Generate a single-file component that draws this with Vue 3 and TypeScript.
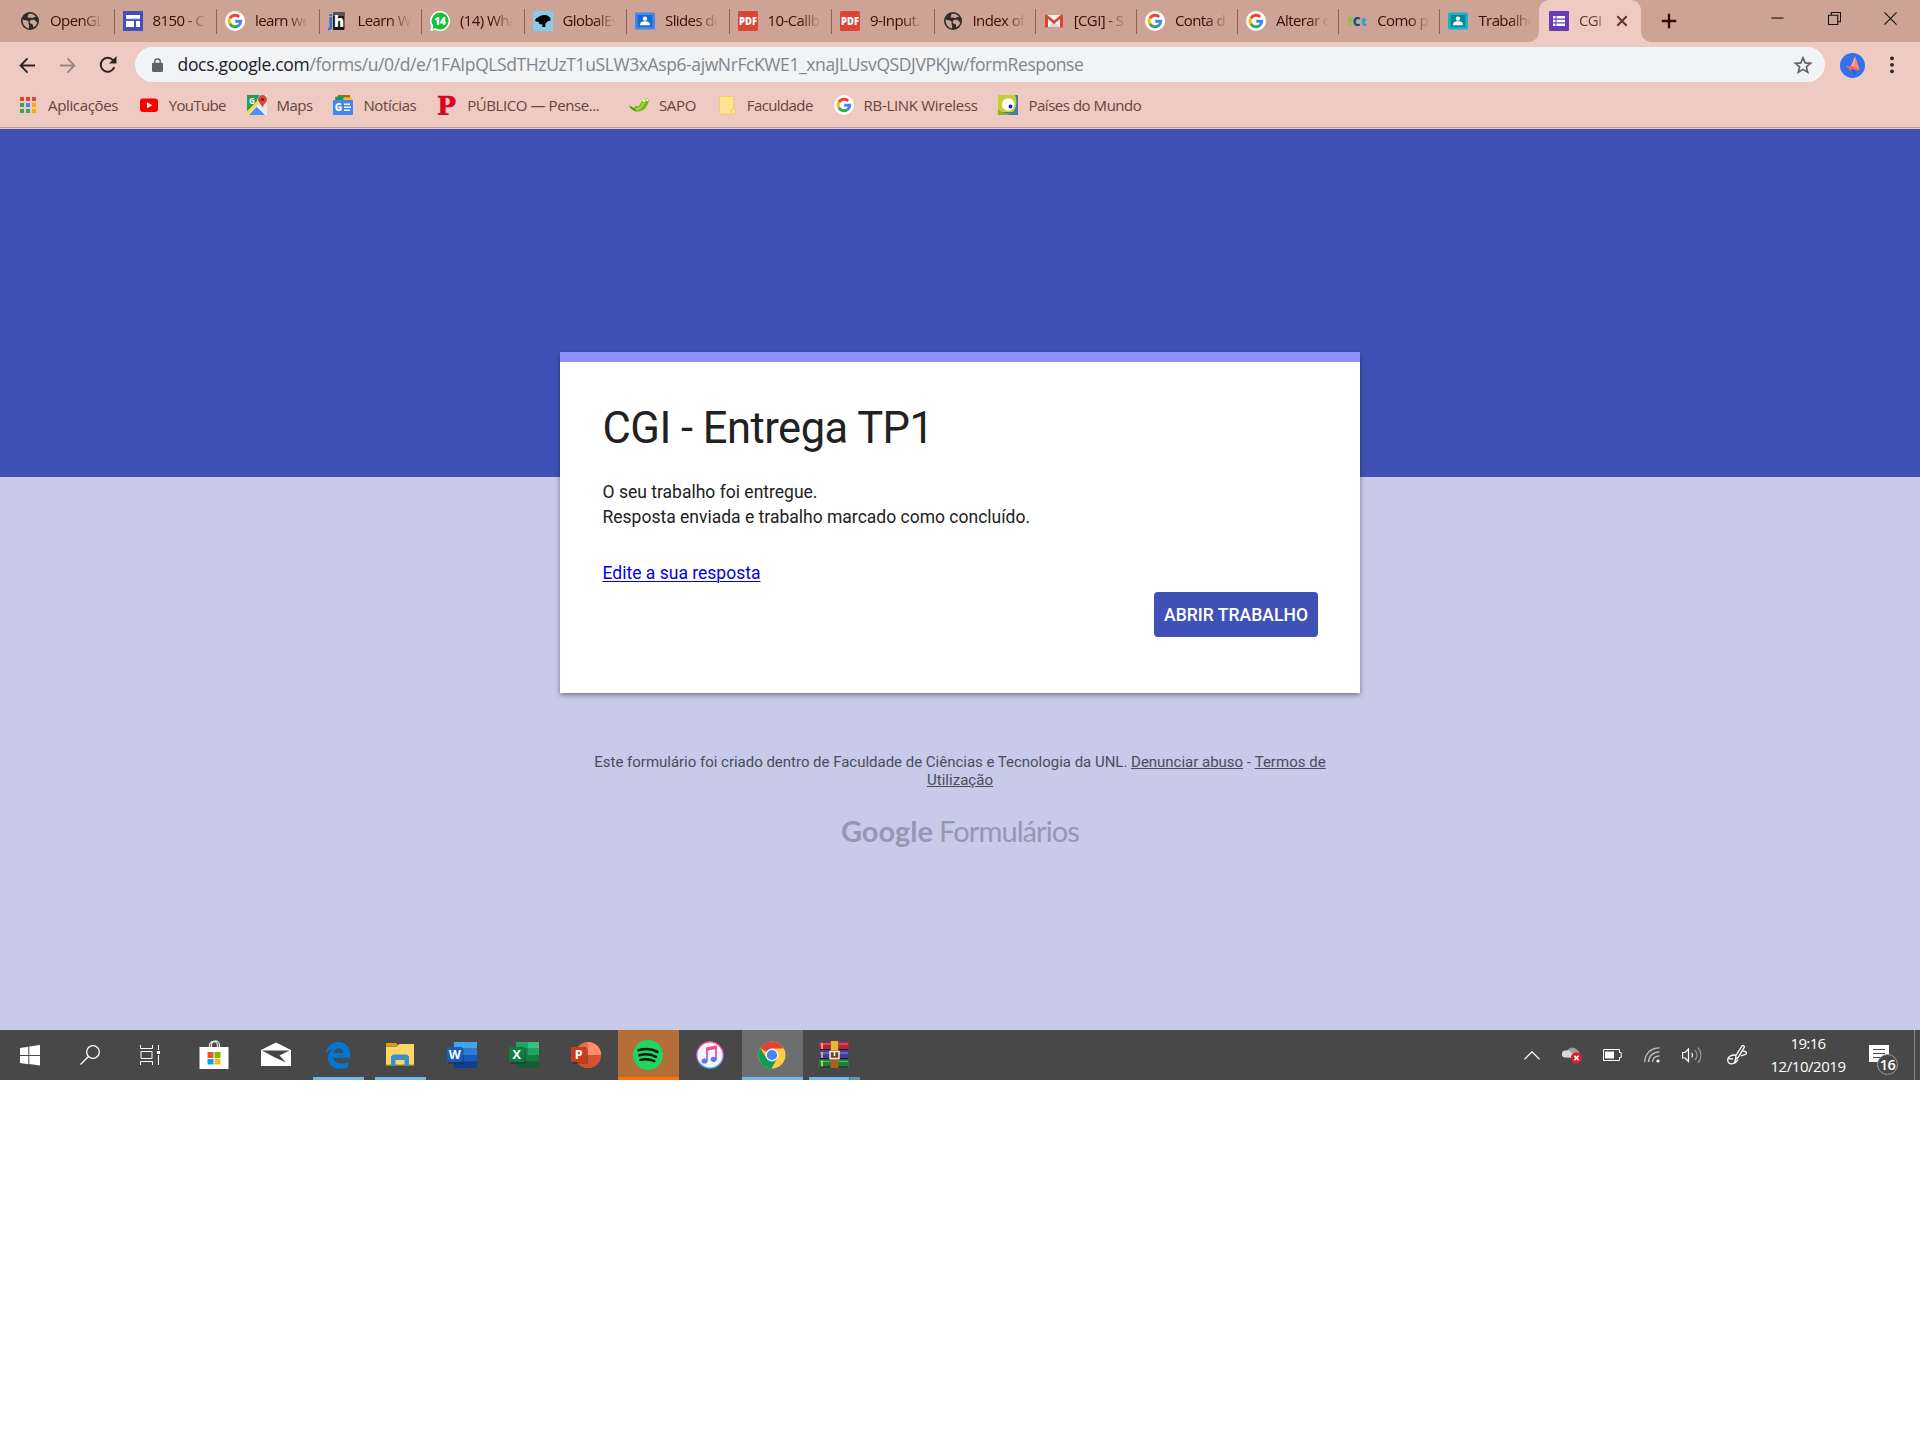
<script setup lang="ts">
interface Tab { icon: string; label: string }
interface Bookmark { icon: string; label: string; width: number }
interface TaskApp { icon: string; name: string; state?: string }

// Spreads a label over a given width by adjusting its tracking
const vFit = {
  mounted(el: HTMLElement, binding: { value: number }) {
    const count = (el.textContent ?? '').trim().length
    const natural = el.getBoundingClientRect().width
    if (count > 1) el.style.letterSpacing = `${(binding.value - natural) / count}px`
  },
}

const googleG =
  '<circle cx="10" cy="10" r="10" fill="#fff"/>' +
  '<g fill="none" stroke-width="2.9"><path d="M14.2 6A5.8 5.8 0 0 0 4.9 7.3" stroke="#ea4335"/>' +
  '<path d="M4.9 7.2a5.8 5.8 0 0 0 0 5.6" stroke="#fbbc05"/>' +
  '<path d="M4.9 12.7a5.8 5.8 0 0 0 8.9 1.7" stroke="#34a853"/>' +
  '<path d="M13.7 14.5A5.8 5.8 0 0 0 15.8 10.2H10.2" stroke="#4285f4"/></g>'

const globe =
  '<circle cx="10" cy="10" r="9" fill="#2d2b2a"/>' +
  '<path d="M2.6 8.6C4.400 9.600 7 8.800 8.400 10.400c1 1.300-.6 1.800.4 3 .8 1 .3 2.600-.1 4C5.200 16.900 2.400 13.500 2.600 8.600z" fill="#cda396"/>' +
  '<path d="M8.300 3.200c3-1 6 .3 7.600 2.600-1 .5-1.600 0-2.500.6-.8.700-1.700.8-2.400.4-.8-.5-2.600.3-3.400-.6-.6-.8.900-1.600.7-3z" fill="#cda396"/>' +
  '<path d="M10.800 9.300c1.500-.9 4-.5 5 .9.600 1 1.300.6 1.500 1.100-.4 2.200-1.900 4.200-4 5-.7-1 .2-2-.6-2.900-.8-.7-2.700-.6-2.900-2-.1-.9.200-1.700 1-2.100z" fill="#cda396"/>'

const pdf =
  '<rect width="20" height="20" rx="1.500" fill="#db4437"/><text x="10" y="14" text-anchor="middle" font-family="Open Sans, sans-serif" font-weight="800" font-size="10.500" textLength="18" lengthAdjust="spacingAndGlyphs" fill="#fff">PDF</text>'

const person = (frame: string, body: string) =>
  `<rect y="1.500" width="20" height="17" rx="1.500" fill="${frame}"/><rect x="2.700" y="4" width="14.600" height="12" fill="${body}"/>` +
  '<circle cx="10" cy="7.600" r="2.200" fill="#fff"/><path d="M5 14.300c0-3.200 2.200-4 5-4s5 .8 5 4z" fill="#fff"/>'

const art: Record<string, string> = {
  globe,
  google: googleG,
  pdf,
  sites: '<rect width="20" height="20" fill="#3f51b5"/><path d="M3 4h14v4H3zM3 10h8v6H3zM13 10h4v6h-4z" fill="#fff"/><path d="M3 8.200h14" stroke="#6c7bd0"/>',
  jh: '<rect x="5" y="1" width="11.500" height="18" rx="1" fill="#1b1b1b"/><rect x="5" y="1" width="11.500" height="4" fill="#555"/><text x="0" y="15" font-family="Open Sans, sans-serif" font-weight="700" font-size="16" fill="#2d6fc0">j</text><text x="6" y="15.500" font-family="Open Sans, sans-serif" font-weight="800" font-size="15" fill="#fff">h</text>',
  whats: '<path d="M10 0a10 10 0 1 1-4.800 18.800L.3 20l1.200-4.800A10 10 0 0 1 10 0z" fill="#fff"/><path d="M10 1.500a8.500 8.500 0 1 1-4.500 15.700L2.500 18l.8-3A8.500 8.500 0 0 1 10 1.500z" fill="#12c13c"/><text x="10" y="13.600" text-anchor="middle" font-family="Open Sans, sans-serif" font-weight="800" font-size="10" fill="#fff">14</text>',
  events: '<rect width="20" height="20" fill="#86cbea"/><path d="M2.300 8.500C3.500 6.500 6 6.300 8 4.500c3-1 6-.5 7.500.8 1.500.7 2.200 2 2 4.200l-3 1-2 2-.3 3.500h-3l.2-2.500-3-.5-.8-2-3.300-.7z" fill="#000"/>',
  slides: person('#4285f4', '#1967d2'),
  classroom: person('#12b5cb', '#0b8793'),
  gmail: '<path d="M2 4h16v12H2z" fill="#f4f4f4"/><path d="M4.500 16 10 10.500 15.500 16z" fill="#d7d7d7"/><path d="M1 16.500V3.800h2l7 5.700 7-5.700h2v12.700h-3V8l-6 5-6-5v8.500z" fill="#db4437"/>',
  fct: '<g font-family="Open Sans, sans-serif" font-weight="800" font-size="12.500"><text x="0" y="14.500" fill="#8bc53f">f</text><text x="5.700" y="14.500" font-size="12" fill="#164b7c">C</text><text x="13.800" y="14.500" fill="#1ba9d9">t</text></g>',
  forms: '<rect width="20" height="20" rx="1" fill="#673ab7"/><path d="M4 5h2.500v2.500H4zM7.500 5H16v2.500H7.500zM4 8.800h2.500v2.500H4zM7.500 8.800H16v2.500H7.500zM4 12.600h2.500v2.500H4zM7.500 12.600H16v2.500H7.500z" fill="#fff"/>',
  apps: '<path d="M2 2h4v4H2zM8 2h4v4H8zM14 2h4v4h-4z" fill="#ea4335"/><path d="M2 8h4v4H2zM2 14h4v4H2z" fill="#34a853"/><path d="M8 8h4v4H8z" fill="#4285f4"/><path d="M14 8h4v4h-4zM14 14h4v4h-4z" fill="#fbab00"/><path d="M8 14h4v4H8z" fill="#34a853"/>',
  youtube: '<rect x="1" y="3.500" width="18" height="13.500" rx="3" fill="#f00"/><path d="M8 7.300v6l5.300-3z" fill="#fff"/>',
  maps: '<path d="M0 0h20v20H0z" fill="#e8e8e8"/><path d="M0 0h13L0 17z" fill="#1fa463"/><path d="M0 0h11.500L9 9.500l-9 9z" fill="#249c5c"/><path d="m2 20 8-8.500 8.500 8.500z" fill="#4d8df5"/><path d="m-.5 19 11-11.500" stroke="#ffd44a" stroke-width="3"/><path d="m10 11 9 9" stroke="#fff" stroke-width="1.200"/><text x="2" y="8.500" font-family="Open Sans, sans-serif" font-size="8" font-weight="700" fill="#fff">G</text><path d="M15.500 0a4.600 4.600 0 0 1 4.500 4.600c0 3.400-3.800 4.500-4.500 8.400-.7-3.900-4.500-5-4.500-8.400A4.600 4.600 0 0 1 15.500 0z" fill="#db4437"/><circle cx="15.500" cy="4.600" r="1.700" fill="#73261e"/>',
  news: '<path d="M5 0h12v8H5z" fill="#ea4335"/><path d="m2 2 11-2 2 8H3z" fill="#0f9d58"/><path d="m11 2 8 1-1 5H9z" fill="#fbbc04"/><rect y="5" width="20" height="15" rx="1" fill="#4285f4"/><text x="1.700" y="16" font-family="Open Sans, sans-serif" font-size="10" font-weight="800" fill="#fff">G</text><path d="M11 9.300h6M11 12.300h7M11 15.300h6" stroke="#fff" stroke-width="1.600"/>',
  publico: '<text x="0" y="19.500" font-family="DejaVu Serif, serif" font-size="26" font-weight="700" textLength="19" lengthAdjust="spacingAndGlyphs" fill="#d7061d" stroke="#d7061d" stroke-width=".6">P</text>',
  sapo: '<path d="M0 10.500c2.500-.5 3 2.500 5 2.500 1-2 2.500-2.500 4.500-1.500 2-2 3-5.500 5-7.500l2 .5L18 3l2 2c-1 6-5 11.500-11 11.500-4 0-8-2-9-6z" fill="#72b51e"/><path d="M6 14.500c4 0 7-3 9-7" stroke="#a7dc3a" stroke-width="1.800" fill="none"/><circle cx="15" cy="5.500" r="1.500" fill="#e9f7c8"/><circle cx="18.300" cy="5" r="1.200" fill="#e9f7c8"/><path d="m2 12 5 3.800" stroke="#37771a"/>',
  folder: '<path d="M2.500 1.500h14v12l1.500.5v4l-2 1H2.500z" fill="#ffe491" stroke="#f1cb59" stroke-width=".8"/><path d="M14 18.500v-4l2.500-1" fill="none" stroke="#f1cb59"/>',
  world: '<path d="M0 0h20v20H0z" fill="#477aa5"/><path d="M0 0h17c2 5 2 12-2 17H0z" fill="#c7cf2f"/><circle cx="10.200" cy="9.500" r="6.200" fill="#fff"/><circle cx="12.500" cy="11.500" r="1.900" fill="#1810e0"/><path d="M0 14c2 3 7 5 13 4l-4 2H0z" fill="#99ad22"/>',
}

const tabs: Tab[] = [
  { icon: 'globe', label: 'OpenGL' }, { icon: 'sites', label: '8150 - C' },
  { icon: 'google', label: 'learn we' }, { icon: 'jh', label: 'Learn W' },
  { icon: 'whats', label: '(14) Wha' }, { icon: 'events', label: 'GlobalEv' },
  { icon: 'slides', label: 'Slides de' }, { icon: 'pdf', label: '10-Callb' },
  { icon: 'pdf', label: '9-Input.' }, { icon: 'globe', label: 'Index of' },
  { icon: 'gmail', label: '[CGI] - S' }, { icon: 'google', label: 'Conta d' },
  { icon: 'google', label: 'Alterar c' }, { icon: 'fct', label: 'Como p' },
  { icon: 'classroom', label: 'Trabalho' },
]

const bookmarks: Bookmark[] = [
  { icon: 'apps', label: 'Aplicações', width: 70 }, { icon: 'youtube', label: 'YouTube', width: 57 },
  { icon: 'maps', label: 'Maps', width: 36 }, { icon: 'news', label: 'Notícias', width: 53 },
  { icon: 'publico', label: 'PÚBLICO — Pense...', width: 132 }, { icon: 'sapo', label: 'SAPO', width: 37 },
  { icon: 'folder', label: 'Faculdade', width: 66 }, { icon: 'google', label: 'RB-LINK Wireless', width: 114 },
  { icon: 'world', label: 'Países do Mundo', width: 113 },
]

const office = (letter: string, back: string, tag: string) =>
  back + `<rect x="1.500" y="8.500" width="15.500" height="15.500" rx="1" fill="#0003"/><rect x="0" y="7" width="15.500" height="15" rx="1" fill="${tag}"/>` +
  `<text x="7.700" y="19" text-anchor="middle" font-family="Open Sans, sans-serif" font-weight="700" font-size="12.500" fill="#fff">${letter}</text>`

const sheet = (c: string[]) =>
  `<path d="M7 2h23v6.500H7z" fill="${c[0]}"/><path d="M7 8.500h23V15H7z" fill="${c[1]}"/><path d="M7 15h23v6.500H7z" fill="${c[2]}"/><path d="M7 21.500h23V28H7z" fill="${c[3]}"/>`

Object.assign(art, {
  store: '<path d="M10.500 8V5.500a4 4 0 0 1 8 0V8M12.500 8V5a4 4 0 0 1 8 0v3" fill="none" stroke="#ddd" stroke-width="1.300"/><path d="M.5 7h29v22H.5z" fill="#fff"/><path d="M8.500 12h6v6h-6z" fill="#f25022"/><path d="M15.500 12h6v6h-6z" fill="#7fba00"/><path d="M8.500 19h6v5.500h-6z" fill="#00a4ef"/><path d="M15.500 19h6v5.500h-6z" fill="#ffb900"/>',
  mail: '<path d="M0 10 15 2.500 30 10v16H0z" fill="#fff"/><path d="M1 10.500h27.500L18.500 15.500l6.500 7-12-5.500z" fill="#454545"/>',
  edge: '<path d="M2.800 13.600C4 6.400 9 2 15.400 2 22.500 2 27 7 27 14.500v3.300H10.500c.4 4 3.800 5.700 8 5.700 2.600 0 4.800-.7 6.800-1.900v5.300C23 28.200 20.500 28.700 17.500 28.700 10 28.700 5 24.600 5 18c0-3.900 2.200-7.200 5.700-9-3.500.8-6 2.300-7.900 4.600zM10.600 13h9.800c0-2.700-1.700-4.600-4.700-4.600-2.800 0-4.800 1.900-5.100 4.600z" fill="#0078d7"/>',
  explorer: '<path d="M1 3h10l3 3H1z" fill="#e39d05"/><path d="M1 6.500h11L14.500 4H29v21H1z" fill="#ffd765"/><path d="M1 24h28v1.500H1z" fill="#e7ac30"/><path d="M6 26v-9.500l2-2h14l2 2V26h-4.500v-6h-9v6z" fill="#3491d4"/>',
  word: office('W', sheet(['#41a5ee', '#2b7cd3', '#185abd', '#103f91']), '#185abd'),
  excel: office('X', sheet(['#21a366', '#17864e', '#107c41', '#185c37']) + '<path d="M19 2h11v6.500H19z" fill="#33c481"/><path d="M19 8.500h11V15H19z" fill="#21a366"/>', '#107c41'),
  ppt: office('P', '<circle cx="17" cy="15" r="13" fill="#ed6c47"/><path d="M17 2a13 13 0 0 1 13 13H17z" fill="#ff8f6b"/><path d="M4 15h26a13 13 0 0 1-26 0z" fill="#d35230"/>', '#c43e1c'),
  spotify: '<circle cx="15" cy="15" r="15" fill="#1ed760"/><path d="M5.500 10.200c7-2 14-1.300 19 1.700M6.500 15.300c6-1.700 11.700-1 16.500 1.500M7.500 19.900c5-1.300 9.500-.7 13.700 1.300" fill="none" stroke="#10150f" stroke-width="2.500" stroke-linecap="round"/>',
  itunes: '<defs><linearGradient id="tune" x2="0" y2="1"><stop stop-color="#fb4a79"/><stop offset=".6" stop-color="#b65ee8"/><stop offset="1" stop-color="#23bdf3"/></linearGradient></defs><circle cx="15" cy="15" r="13.200" fill="#f5f5f8" stroke="url(#tune)" stroke-width="1.300"/><path d="M12 21V9l9-2v12.700" fill="none" stroke="url(#tune)" stroke-width="1.800"/><path d="m11.300 7.500 10.500-2.300v3.500l-10.500 2.300z" fill="#f04d89"/><ellipse cx="9.500" cy="21" rx="3" ry="2.600" fill="#776be8"/><ellipse cx="18.700" cy="19.300" rx="3" ry="2.600" fill="#6975e8"/>',
  chrome: '<circle cx="15" cy="15" r="13.500" fill="#ffcd40"/><path d="M15 15 3.300 8.200A13.500 13.500 0 0 1 26.700 8.500H15z" fill="#db4437"/><path d="M3.300 8.200A13.500 13.500 0 0 0 14.500 28.500l5.700-10.300L15 15 9.600 18.200z" fill="#0f9d58"/><circle cx="15" cy="15" r="6.500" fill="#f1f1f1"/><circle cx="15" cy="15" r="5.100" fill="#4587f3"/>',
  winrar: '<rect y="2" width="30" height="8" rx="1" fill="#b5213f"/><rect y="11" width="30" height="8" rx="1" fill="#3b3fa4"/><rect y="19.500" width="30" height="8" rx="1" fill="#17803a"/><path d="M1 4h28" stroke="#e56d86"/><path d="M1 13h28" stroke="#888ae2"/><path d="M1 21.500h28" stroke="#58bd70"/><path d="M1 9.500h28M1 18.500h28M1 27h28" stroke="#1d1720"/><path d="M3 3v6M3 12v6M3 20.500v6" stroke="#f5d33f" stroke-width="1.500"/><path d="M11.500 1h8v27h-8z" fill="#a9601e"/><path d="M12 1h7v9h-7z" fill="#e3b735"/><rect x="11" y="11.500" width="9" height="7" fill="#76441c" stroke="#eee" stroke-width="1.500"/><path d="M15.500 11v5" stroke="#fff" stroke-width="1.500"/>',
})

const taskApps: TaskApp[] = [
  { icon: 'store', name: 'Store' }, { icon: 'mail', name: 'Mail' },
  { icon: 'edge', name: 'Edge', state: 'open' }, { icon: 'explorer', name: 'Explorer', state: 'open' },
  { icon: 'word', name: 'Word' }, { icon: 'excel', name: 'Excel' }, { icon: 'ppt', name: 'PowerPoint' },
  { icon: 'spotify', name: 'Spotify', state: 'alert' }, { icon: 'itunes', name: 'iTunes' },
  { icon: 'chrome', name: 'Chrome', state: 'active' }, { icon: 'winrar', name: 'WinRAR', state: 'open multi' },
]
</script>

<template>
  <div class="screen">
    <div class="tabstrip">
      <div v-for="(tab, i) in tabs" :key="i" class="tab" :class="{ narrow: i > 8, last: i === 14 }">
        <svg class="fav" viewBox="0 0 20 20" v-html="art[tab.icon]"></svg>
        <span class="tab-label">{{ tab.label }}</span>
      </div>
      <div class="tab current">
        <svg class="fav" viewBox="0 0 20 20" v-html="art.forms"></svg>
        <span class="tab-label">CGI</span>
        <svg class="close" viewBox="0 0 12 12"><path d="m1.300 1.300 9.400 9.400m0-9.400-9.400 9.400" /></svg>
      </div>
      <svg class="plus" viewBox="0 0 16 16"><path d="M8 .8v14.400M.8 8h14.400" /></svg>
      <div class="window-buttons">
        <svg viewBox="0 0 14 14"><path d="M.5 6.500h13" /></svg>
        <svg viewBox="0 0 14 14"><path d="M.5 3.500h10v10H.5zM3.500 3V.5h10v10H11" /></svg>
        <svg viewBox="0 0 14 14"><path d="m.5.5 13 13m0-13-13 13" /></svg>
      </div>
    </div>

    <div class="toolbar">
      <svg class="nav back" viewBox="0 0 18 18"><path d="M17 9H2M9 1.500 1.700 9 9 16.500" /></svg>
      <svg class="nav forward" viewBox="0 0 18 18"><path d="M1 9h15M9 1.500 16.300 9 9 16.500" /></svg>
      <svg class="nav reload" viewBox="0 0 18 18"><path d="M15.300 11.200A7 7 0 1 1 14 4.200l1 1.100" /><path d="M17.500 0v7.500H10z" fill="#2d2522" stroke="none" /></svg>
      <div class="omnibox">
        <svg class="lock" viewBox="0 0 12 15"><rect y="5" width="12" height="10" rx="1.200" fill="#5f6368" /><path d="M3 6V4a3 3 0 0 1 6 0v2" fill="none" stroke="#5f6368" stroke-width="1.500" /></svg>
        <span v-fit="132" class="host">docs.google.com</span>
        <span v-fit="774" class="path">/forms/u/0/d/e/1FAIpQLSdTHzUzT1uSLW3xAsp6-ajwNrFcKWE1_xnaJLUsvQSDJVPKJw/formResponse</span>
        <svg class="star" viewBox="0 0 18 18"><path d="m9 1.800 2.100 5.100 5.500.4-4.200 3.600 1.300 5.400L9 13.400l-4.700 2.900 1.300-5.400-4.200-3.600 5.500-.4z" /></svg>
      </div>
      <svg class="avatar" viewBox="0 0 25 25"><circle cx="12.500" cy="12.500" r="12.500" fill="#3071ed" /><path d="m12 14 3.500 7-1.500-.5-2.500-5z" fill="#2b3fae" /><path d="M15 3.500c1.500 3 2.500 6 3.500 9.500l1 4-4.500-2-4-2c1.500-3 3-6 4-9.500z" fill="#ff8273" /><path d="m4.500 13.500 7.500-.5 7.500 4-2.500.5-5-1.500-2 2-1.500-3z" fill="#f2695f" /><path d="m11 13 4-9.500-.5 10z" fill="#ffa597" /></svg>
      <svg class="dots" viewBox="0 0 4 18"><circle cx="2" cy="2.300" r="1.900" /><circle cx="2" cy="8.800" r="1.900" /><circle cx="2" cy="15.300" r="1.900" /></svg>
    </div>

    <div class="bookmarks">
      <div v-for="mark in bookmarks" :key="mark.label" class="bookmark" :class="{ wide: mark.icon === 'publico' }">
        <svg class="fav" viewBox="0 0 20 20" v-html="art[mark.icon]"></svg>
        <span v-fit="mark.width">{{ mark.label }}</span>
      </div>
    </div>

    <main class="page">
      <section class="card">
        <h1><span v-fit="331">CGI - Entrega TP1</span></h1>
        <p><span v-fit="215">O seu trabalho foi entregue.</span><br /><span v-fit="427.5">Resposta enviada e trabalho marcado como concluído.</span></p>
        <a class="edit" href="#"><span v-fit="158">Edite a sua resposta</span></a>
        <button><span v-fit="144">ABRIR TRABALHO</span></button>
      </section>
      <footer>
        <div><span v-fit="533">Este formulário foi criado dentro de Faculdade de Ciências e Tecnologia da UNL.</span>&nbsp;<a v-fit="112">Denunciar abuso</a> - <a v-fit="71">Termos de</a></div>
        <div><a v-fit="66">Utilização</a></div>
        <div class="brand"><b v-fit="92">Google</b><span v-fit="140">Formulários</span></div>
      </footer>
    </main>

    <div class="taskbar">
      <div class="sys"><svg width="20" height="21" viewBox="0 0 20 21"><path d="M0 3 8.300 1.700V10H0zM9.300 1.500 20 0v10H9.300zM0 11h8.300v8.300L0 18zM9.300 11H20v9.500L9.300 19z" fill="#fff" /></svg></div>
      <div class="sys"><svg width="20" height="20" viewBox="0 0 20 20" fill="none" stroke="#fff" stroke-width="1.300"><circle cx="13" cy="7" r="6.300" /><path d="M8.500 11.500.5 19.500" /></svg></div>
      <div class="sys"><svg width="20" height="20" viewBox="0 0 20 20" fill="none" stroke="#fff"><path d="M.5 0v3.500h12V0M.5 20v-3.500h12V20M1 6.500h11v7H1zM18.500 0v5M18.500 10v10" /><path d="M17 6h3v3h-3z" fill="#fff" stroke="none" /></svg></div>
      <div class="apps">
        <div v-for="app in taskApps" :key="app.name" class="app" :class="app.state">
          <svg width="30" height="30" viewBox="0 0 30 30" v-html="art[app.icon]"></svg>
        </div>
      </div>
      <div class="tray">
        <svg width="16" height="9" viewBox="0 0 16 9" fill="none" stroke="#fff" stroke-width="1.300"><path d="M.4 8.400 8 .8l7.600 7.600" /></svg>
        <svg class="cloud" width="20" height="18" viewBox="0 0 20 18"><path d="M5 6a5.500 5.500 0 0 1 10-2c2 .5 3 3 1.500 5L8 11z" fill="#a1a1a1" /><path d="M3 11.500A3.500 3.500 0 0 1 3.500 4.500c3-.8 5 .5 6.500 3 3 0 4 2 3 4.500z" fill="#d8d8d8" /><circle cx="14.500" cy="12" r="5.700" fill="#d81f30" /><path d="m12.400 9.900 4.200 4.200m0-4.200-4.200 4.200" stroke="#fff" stroke-width="1.500" /></svg>
        <svg class="battery" width="19" height="12" viewBox="0 0 19 12"><path d="M.5.5h16v3h1.700v5h-1.700v3H.5z" fill="none" stroke="#fff" /><path d="M2 2.500h9v7H2z" fill="#fff" /></svg>
        <svg class="wifi" width="16" height="16" viewBox="0 0 16 16" fill="none" stroke="#c4c4c4" stroke-width="1.200"><path d="M.7 15C1 6.500 7 .9 15.500.8M4.500 15C4.700 9 9 5 15.500 4.800M8.500 15c.2-3.600 3-6 7-6.200" /><circle cx="14" cy="14" r="1.600" fill="#fff" stroke="none" /></svg>
        <svg class="speaker" width="20" height="18" viewBox="0 0 20 18" fill="none" stroke="#fff" stroke-width="1.200"><path d="M.6 6.500h2.500L6.500 3v12.500L3.100 12H.6z" /><path d="M9.800 6.800c.9 1.400.9 3.200 0 4.700" /><path d="M13 4.200c2.500 3 2.500 7 0 10M16 1.500c4 4.500 4 11 0 15.500" stroke="#969696" /></svg>
        <svg class="pen" width="20" height="20" viewBox="0 0 20 20" fill="none" stroke="#fff" stroke-width="1.300"><path d="m8.500 14.500.5-4 6-9.500c1-1 2.800 0 2.200 1.400L11.500 12zM8.500 14.500l-1 4M16 6.500c2-.8 4 .7 3.300 2.300-.6 1.200-3.300.7-5.300 2.200M9 10.200c-3.500-.8-8 1-8.300 4.300-.2 3 2 4.700 4.500 4.300 2.600-.4 4.600-2 5.800-4.300M1 14c2-1 3.500 0 5 0" /></svg>
        <div class="clock"><span v-fit="35">19:16</span><span v-fit="75">12/10/2019</span></div>
        <div class="notice"><svg width="20" height="21" viewBox="0 0 20 21"><path d="M0 0h20v17h-7l-4 4v-4H0z" fill="#fff" /><path d="M4 4.500h12M4 8.500h12M4 12.500h8" stroke="#484848" stroke-width="1.200" /></svg><span class="count">16</span></div>
      </div>
      <div class="peek"></div>
    </div>
  </div>
</template>

<style>
body { background: #fff; }
</style>

<style scoped>
.screen { width: 1920px; height: 1456px; background: #fff; font-family: "Open Sans", sans-serif; overflow: hidden; }
svg { display: block; flex: none; }
span, a, b { white-space: pre; }
.fav { width: 20px; height: 20px; }

.tabstrip { height: 42px; background: #cda396; display: flex; padding-left: 11px; box-sizing: border-box; }
.tab { flex: none; width: 102.500px; height: 42px; display: flex; align-items: center; gap: 10px; padding-left: 9px; box-sizing: border-box; position: relative; }
.tab.narrow { width: 101.200px; }
.tab:not(.current):not(.last)::after { content: ""; position: absolute; right: -1px; top: 9px; width: 1px; height: 25px; background: #925e57; }
.tab-label { width: 53px; overflow: hidden; font-size: 15px; line-height: 22px; padding-bottom: 2px; letter-spacing: -.6px; color: #3f0a07; -webkit-mask-image: linear-gradient(90deg, #000 60%, transparent 100%); mask-image: linear-gradient(90deg, #000 60%, transparent 100%); }
.tab.last { width: 99.500px; }
.tab.current { width: 102px; padding-left: 10px; background: #eecac2; border-radius: 10px 10px 0 0; }
.tab.current::before, .tab.current::after { content: ""; position: absolute; bottom: 0; width: 10px; height: 10px; }
.tab.current::before { left: -10px; background: radial-gradient(circle at 0 0, transparent 9.500px, #eecac2 10px); }
.tab.current::after { right: -10px; background: radial-gradient(circle at 100% 0, transparent 9.500px, #eecac2 10px); }
.current .tab-label { width: 23px; color: #5a3a35; -webkit-mask-image: linear-gradient(90deg, #000 70%, #0007); mask-image: linear-gradient(90deg, #000 70%, #0007); }
.close { width: 12px; height: 12px; stroke: #64322c; stroke-width: 2; margin-left: 4px; }
.plus { width: 16px; height: 16px; stroke: #390804; stroke-width: 2.300; margin: 13px 0 0 20px; }
.window-buttons { margin: 12px 23px 0 auto; display: flex; gap: 43.500px; }
.window-buttons svg { width: 13px; height: 13px; fill: none; stroke: #120c0b; stroke-width: 1.150; }

.toolbar { height: 46px; background: #eecac2; display: flex; align-items: center; padding: 0 26px 0 19px; box-sizing: border-box; }
.nav { width: 17px; height: 17px; fill: none; stroke: #2d2522; stroke-width: 2; }
.forward { margin-left: 23px; stroke: #9c8580; }
.reload { width: 18px; height: 18px; margin-left: 22.500px; }
.omnibox { flex: none; width: 1690px; height: 35px; margin: -1px 0 0 18.500px; border-radius: 18px; background: #f1f3f4; display: flex; align-items: center; padding: 0 13px 0 17px; box-sizing: border-box; font-size: 17.500px; line-height: 24px; }
.omnibox span { padding-bottom: 1px; }
.lock { width: 11px; height: 14px; margin-right: 14.500px; }
.host { color: #202124; }
.path { color: #80868b; }
.star { width: 18px; height: 18px; margin-left: auto; fill: none; stroke: #5f6368; stroke-width: 1.700; }
.avatar { width: 25px; height: 25px; margin-left: 15px; }
.dots { width: 4px; height: 18px; margin-left: auto; fill: #2d2522; }

.bookmarks { height: 41px; background: #eecac2; border-bottom: 1px solid #eecac2; box-shadow: inset 0 -1px #b89e99; box-sizing: border-box; padding: 0 0 6px 18px; display: flex; align-items: center; gap: 20.800px; }
.bookmarks .bookmark { display: flex; align-items: center; gap: 10px; font-size: 15px; line-height: 20px; color: #67433c; }
.bookmark span { padding-bottom: 1px; }
.bookmark.wide { margin-right: 9px; }

.page { height: 901px; box-sizing: border-box; padding-top: 223px; background: linear-gradient(#3f51b5 348px, #c7cae8 348px); font-family: Roboto, sans-serif; display: flex; flex-direction: column; align-items: center; }
.card { width: 800px; height: 341px; box-sizing: border-box; border-top: 10px solid #8c8fff; background: #fff; padding: 38px 42px 56px 42.500px; box-shadow: 0 2px 5px rgba(0, 0, 0, .42); display: flex; flex-direction: column; align-items: flex-start; color: #212121; }
h1 { margin: 0; font-size: 43.500px; font-weight: 400; line-height: 58px; }
p { margin: 22px 0 0; font-size: 17.500px; line-height: 25px; }
.edit { margin-top: 31px; font-size: 17.500px; line-height: 25px; color: #00e; text-underline-offset: 2px; text-decoration-thickness: 1px; }
button { align-self: flex-end; margin-top: 6px; width: 164px; height: 45px; flex: none; padding: 0; border: 0; border-radius: 4px; background: #3f51b5; color: #fff; font: 500 17.500px Roboto, sans-serif; }
footer { margin-top: 60px; width: 800px; text-align: center; font-size: 15px; line-height: 18px; color: #4b4d5a; }
footer a { text-decoration: underline; }
.brand { margin-top: 23px; display: flex; justify-content: center; gap: 6px; font: 29px/38px Lato, sans-serif; color: #9498b0; }
.brand b { font-weight: 700; }

.taskbar { height: 50px; background: #484848; display: flex; color: #fff; }
.sys { flex: none; width: 60px; display: flex; align-items: center; justify-content: center; }
.apps { display: flex; gap: 1px; margin-left: 4px; }
.app { width: 61px; height: 50px; display: flex; align-items: center; padding-left: 15px; box-sizing: border-box; position: relative; }
.app::after { position: absolute; bottom: 0; left: 5px; width: 51px; height: 3px; background: #76b5ed; }
.open::after, .active::after, .alert::after { content: ""; }
.active { background: #6d6f6f; }
.alert { background: #b66e38; }
.active::after, .alert::after { left: 0; width: 61px; }
.alert::after { background: #ff7300; }
.multi::after { background: linear-gradient(90deg, #76b5ed 40px, #4c7397 40px 41px, #6092bd 41px); }
.tray { margin-left: auto; display: flex; align-items: center; }
.cloud { margin-left: 22px; }
.battery { margin-left: 21px; }
.wifi { margin-left: 22px; }
.speaker { margin-left: 22px; }
.pen { margin-left: 25px; }
.clock { width: 76px; margin-left: 23px; display: flex; flex-direction: column; align-items: center; font-size: 15px; line-height: 23px; }
.notice { position: relative; margin-left: 23px; margin-right: 25px; }
.count { position: absolute; left: 8px; top: 9px; width: 21px; height: 21px; border-radius: 50%; border: 1px solid #999; box-sizing: border-box; background: #484848; font-size: 14.500px; font-weight: 600; line-height: 19px; text-align: center; letter-spacing: -.5px; }
.peek { width: 5px; border-left: 1px solid #858585; }
</style>
